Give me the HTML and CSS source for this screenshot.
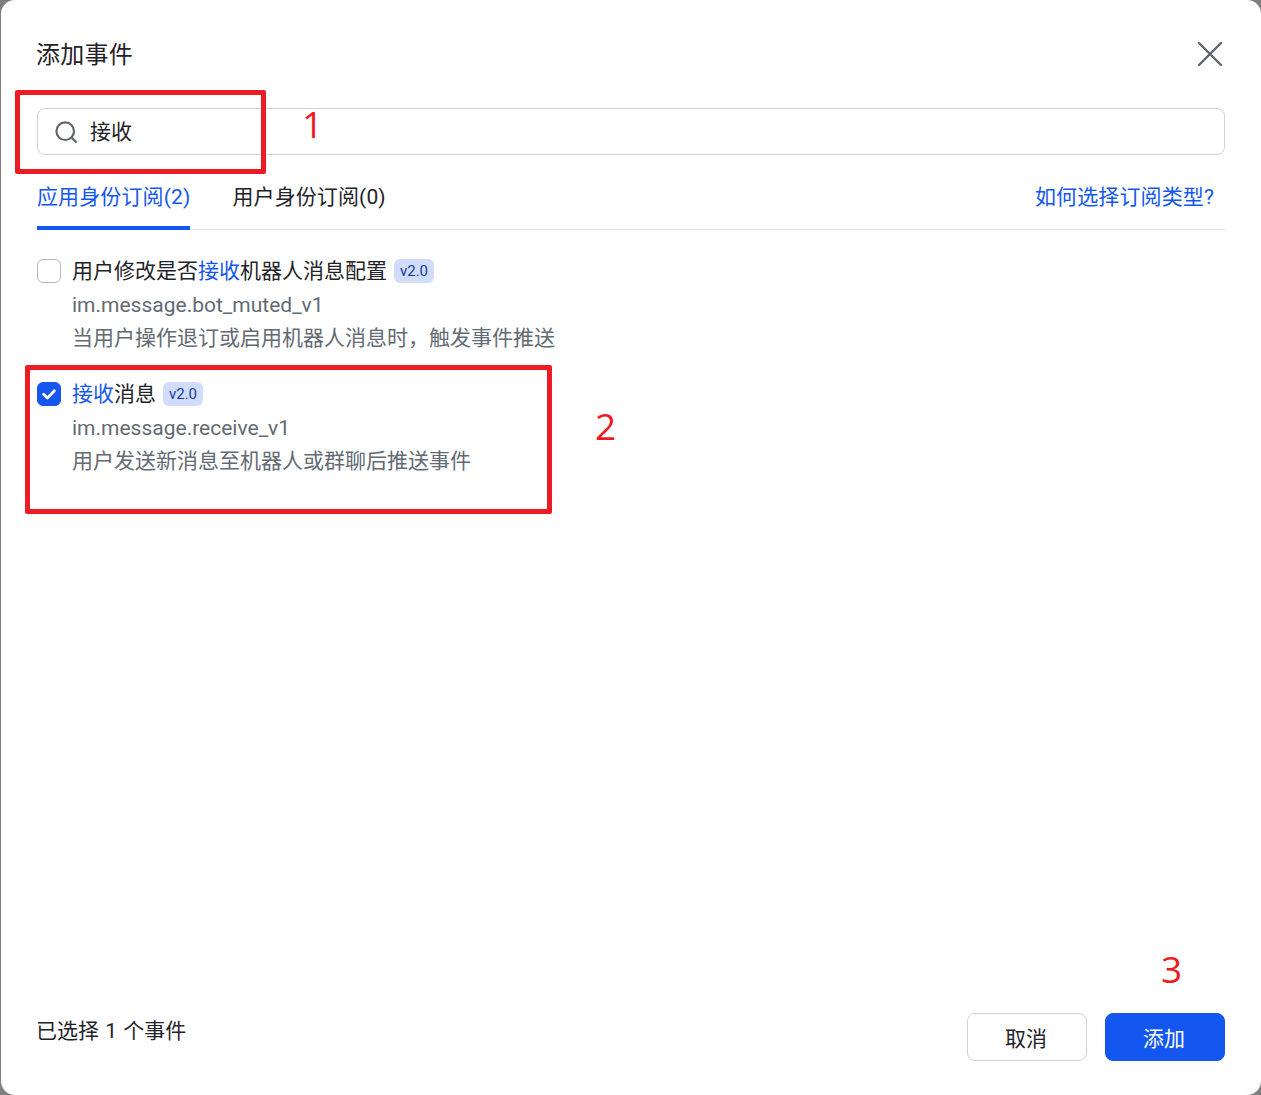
FILE: index.html
```html
<!DOCTYPE html>
<html lang="zh-CN">
<head>
<meta charset="utf-8">
<title>添加事件</title>
<link rel="stylesheet" href="styles.css">
</head>
<body>
<div class="modal">
  <header class="head">
    <h1 class="title">添加事件</h1>
    <svg class="close" width="26" height="26" viewBox="0 0 26 26" aria-hidden="true"><path d="M2 2 L24 24 M24 2 L2 24" fill="none" stroke="#5f666f" stroke-width="2.4" stroke-linecap="round"/></svg>
  </header>
  <div class="search">
    <svg class="search-icon" width="24" height="24" viewBox="0 0 24 24" aria-hidden="true"><circle cx="11.2" cy="11.2" r="8.8" fill="none" stroke="#5f666f" stroke-width="2.2"/><path d="M17.6 17.6 L22 22" fill="none" stroke="#5f666f" stroke-width="2.2" stroke-linecap="round"/></svg>
    <span class="search-text">接收</span>
  </div>
  <nav class="tabs">
    <span class="tab tab-active">应用身份订阅(2)</span>
    <span class="tab">用户身份订阅(0)</span>
    <a class="tab-link">如何选择订阅类型?</a>
  </nav>
  <ul class="events">
    <li class="event">
      <span class="check"></span>
      <div class="event-body">
        <div class="event-name"><span class="name-text">用户修改是否<em class="hl">接收</em>机器人消息配置</span><span class="badge">v2.0</span></div>
        <div class="event-line">im.message.bot_muted_v1</div>
        <div class="event-line">当用户操作退订或启用机器人消息时，触发事件推送</div>
      </div>
    </li>
    <li class="event">
      <span class="check check-on"><svg width="16" height="16" viewBox="0 0 16 16" aria-hidden="true"><path d="M2.6 8.2 L6.4 12 L13.4 4.8" fill="none" stroke="#fff" stroke-width="2.8" stroke-linecap="round" stroke-linejoin="round"/></svg></span>
      <div class="event-body">
        <div class="event-name"><span class="name-text"><em class="hl">接收</em>消息</span><span class="badge">v2.0</span></div>
        <div class="event-line">im.message.receive_v1</div>
        <div class="event-line">用户发送新消息至机器人或群聊后推送事件</div>
      </div>
    </li>
  </ul>
  <footer class="foot">
    <span class="count">已选择 1 个事件</span>
    <div class="actions">
      <button class="btn">取消</button>
      <button class="btn btn-primary">添加</button>
    </div>
  </footer>
</div>
<div class="mark mark-1"></div>
<div class="mark mark-2"></div>
<span class="num num-1">1</span>
<span class="num num-2">2</span>
<span class="num num-3">3</span>
</body>
</html>
```
FILE: styles.css
```css
* { box-sizing: border-box; }
html, body { margin: 0; height: 100%; }
body {
  background: #7f7f7f;
  padding-left: 1px;
  overflow: hidden;
  font-family: "Roboto", "Noto Sans CJK SC", sans-serif;
  font-size: 21px;
  color: #1f2329;
}
.modal {
  height: 1095px;
  background: #fff;
  border-radius: 14px;
  padding: 0 36px 34px;
  display: flex;
  flex-direction: column;
}
.head {
  height: 108px;
  display: flex;
  justify-content: space-between;
  align-items: flex-start;
}
.title {
  margin: 37px 0 0 -1px;
  font-size: 24px;
  line-height: 36px;
  font-weight: 400;
  letter-spacing: 0.25px;
  color: #1f2329;
}
.close { margin-top: 41px; margin-right: 2px; }
.search {
  height: 47px;
  border: 1px solid #d0d3d6;
  border-radius: 8px;
  display: flex;
  align-items: center;
  padding-left: 16px;
  gap: 12px;
}
.search-text { line-height: 30px; }
.tabs {
  height: 75px;
  border-bottom: 1px solid #dee0e3;
  display: flex;
  gap: 42px;
  padding-top: 26px;
  line-height: 32px;
  letter-spacing: 0.12px;
}
.tab { height: 49px; }
.tab-active {
  color: #1456f0;
  border-bottom: 4px solid #1456f0;
  border-radius: 3px 3px 0 0;
}
.tab-link { margin-left: auto; margin-right: 11px; color: #1456f0; }
.events {
  list-style: none;
  margin: 29px 0 0;
  padding: 0;
  display: flex;
  flex-direction: column;
  gap: 27px;
}
.event { display: flex; gap: 11px; }
.check {
  flex: none;
  width: 24px;
  height: 24px;
  border: 1px solid #b5b9be;
  border-radius: 6px;
  background: #fff;
  display: flex;
  align-items: center;
  justify-content: center;
}
.check-on { background: #1456f0; border-color: #1456f0; }
.event-name { display: flex; align-items: center; height: 24px; white-space: nowrap; }
.name-text { position: relative; top: -2px; }
.hl { font-style: normal; color: #1456f0; }
.badge {
  margin-left: 7px;
  width: 40px;
  height: 24px;
  border-radius: 6px;
  background: #d1dcfb;
  color: #133c9a;
  font-size: 15px;
  line-height: 24px;
  text-align: center;
}
.event-line { height: 33px; line-height: 33px; color: #646a73; white-space: nowrap; }
.event-name + .event-line { margin-top: 6px; }
.foot {
  margin-top: auto;
  display: flex;
  justify-content: space-between;
  align-items: center;
}
.count { color: #1f2329; position: relative; top: -8px; left: -1px; word-spacing: 1px; }
.actions { display: flex; gap: 18px; }
.btn {
  width: 120px;
  height: 48px;
  border: 1px solid #d0d3d6;
  border-radius: 8px;
  background: #fff;
  font: inherit;
  color: #1f2329;
  padding: 0 2px 0 0;
}
.btn-primary { background: #1456f0; border-color: #1456f0; color: #fff; }
.mark { position: absolute; border: 5px solid #ed1c24; border-radius: 2px; }
.mark-1 { left: 15px; top: 90px; width: 251px; height: 84px; }
.mark-2 { left: 25px; top: 365px; width: 527px; height: 149px; }
.num {
  position: absolute;
  font-family: "Open Sans", sans-serif;
  font-size: 37px;
  line-height: 40px;
  color: #ed1c24;
}
.num-1 { left: 302px; top: 104px; }
.num-2 { left: 595px; top: 406px; }
.num-3 { left: 1161px; top: 949px; }
```
